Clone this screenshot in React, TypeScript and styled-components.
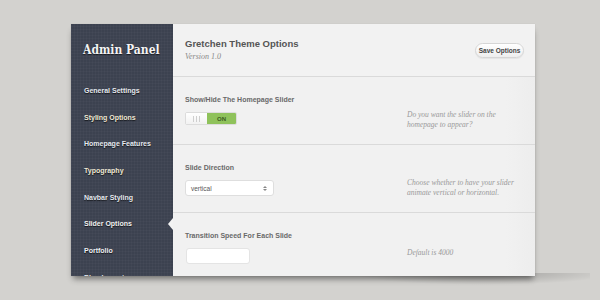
import React from "react";
import styled, { createGlobalStyle } from "styled-components";

const Global = createGlobalStyle`
  html { margin: 0; padding: 0; background: #d3d2cf; }
  body { margin: 0; padding: 0; width: 600px; height: 300px; overflow: hidden; font-family: "Liberation Sans", Arial, sans-serif; }
`;

const Stage = styled.div`
  padding: 24px 0 0 71px;
`;

const Frame = styled.div`
  position: relative;
  width: 464px;
  height: 252px;
  display: flex;
  box-shadow: 0 5px 6px -2px rgba(0, 0, 0, 0.45), 0 0 1px rgba(0,0,0,0.1);
  &::before {
    content: "";
    position: absolute;
    left: 280px;
    right: -55px;
    bottom: -9px;
    height: 12px;
    background: radial-gradient(ellipse at 55% 0%, rgba(0,0,0,0.25), rgba(0,0,0,0) 70%);
    z-index: -1;
  }
`;

const Sidebar = styled.nav`
  width: 102px;
  flex: none;
  overflow: hidden;
  background-color: #3c4250;
  background-image:
    repeating-linear-gradient(0deg, rgba(255,255,255,0.025) 0 1px, transparent 1px 3px),
    repeating-linear-gradient(90deg, rgba(255,255,255,0.025) 0 1px, transparent 1px 3px);
  display: flex;
  flex-direction: column;
`;

const Brand = styled.div`
  height: 53px;
  flex: none;
  display: flex;
  align-items: center;
  padding-left: 12px;
  padding-bottom: 2px;
  box-sizing: border-box;
  font-family: "DejaVu Serif", serif;
  font-weight: bold;
  font-stretch: condensed;
  font-size: 12px;
  color: #f4f4f4;
  text-shadow: 0 1px 1px rgba(0,0,0,0.6);
`;

const NavItem = styled.div<{ $tone: string; $active?: boolean }>`
  position: relative;
  height: 26.7px;
  flex: none;
  display: flex;
  align-items: center;
  padding-left: 13px;
  font-size: 7px;
  font-weight: bold;
  color: ${(p) => p.$tone};
  text-shadow: 0 1px 1px rgba(0,0,0,0.7);
  &::after {
    content: "";
    display: ${(p) => (p.$active ? "block" : "none")};
    position: absolute;
    right: 0;
    top: 50%;
    margin-top: -6px;
    border-style: solid;
    border-width: 6px 5px 6px 0;
    border-color: transparent #f3f3f3 transparent transparent;
  }
`;

const Main = styled.main`
  flex: 1;
  overflow: hidden;
  background: #f1f1f1;
  display: flex;
  flex-direction: column;
`;

const Header = styled.header`
  height: 53px;
  flex: none;
  box-sizing: border-box;
  display: flex;
  align-items: center;
  justify-content: space-between;
  padding: 0 11px 0 12px;
  background: #f2f2f2;
  border-bottom: 1px solid #dadada;
  box-shadow: 0 1px 0 #fafafa;
`;

const TitleBlock = styled.div`
  display: flex;
  flex-direction: column;
  gap: 3px;
  margin-top: -2px;
`;

const Title = styled.div`
  font-size: 9.5px;
  font-weight: bold;
  color: #555;
`;

const Version = styled.div`
  font-family: "Liberation Serif", serif;
  font-style: italic;
  font-size: 8px;
  color: #888;
`;

const SaveButton = styled.button`
  height: 15px;
  width: 49px;
  padding: 0;
  border-radius: 8px;
  border: 1px solid #d6d6d6;
  background: linear-gradient(#ffffff, #eeeeee);
  box-shadow: 0 1px 1px rgba(0,0,0,0.06);
  font-family: "Liberation Sans", Arial, sans-serif;
  font-size: 6.5px;
  font-weight: bold;
  color: #444;
`;

const Row = styled.section<{ $h: number }>`
  height: ${(p) => p.$h}px;
  flex: none;
  box-sizing: border-box;
  display: grid;
  grid-template-columns: 222px 1fr;
  padding-left: 12px;
  border-bottom: 1px solid #dadada;
  box-shadow: 0 1px 0 #fafafa;
  background: linear-gradient(90deg, #f1f1f1 0%, #f1f1f1 92%, #ededed 100%);
`;

const Field = styled.div`
  display: flex;
  flex-direction: column;
  align-items: flex-start;
  padding-top: 19px;
  gap: 9px;
`;

const Label = styled.div`
  font-size: 7px;
  font-weight: bold;
  color: #696969;
`;

const Desc = styled.div<{ $top: number }>`
  padding-top: ${(p) => p.$top}px;
  font-family: "Liberation Serif", serif;
  font-style: italic;
  font-size: 7.5px;
  line-height: 9.5px;
  color: #999999;
`;

const Toggle = styled.div`
  display: flex;
  height: 13px;
  width: 52px;
  border: 1px solid #dcdcdc;
  border-radius: 2px;
  box-sizing: border-box;
  overflow: hidden;
  background: #fff;
`;

const Grip = styled.div`
  width: 21px;
  display: flex;
  align-items: center;
  justify-content: center;
  gap: 2px;
  background: linear-gradient(#ffffff, #f2f2f2);
`;

const GripLine = styled.span`
  width: 1px;
  height: 6px;
  background: #cfcfcf;
`;

const OnPart = styled.div`
  flex: 1;
  background: #8fc25b;
  display: flex;
  align-items: center;
  justify-content: center;
  font-size: 6px;
  font-weight: bold;
  color: #3d5d22;
`;

const Select = styled.div`
  width: 89px;
  height: 16px;
  box-sizing: border-box;
  border: 1px solid #dedede;
  border-radius: 3px;
  background: #fff;
  display: flex;
  align-items: center;
  justify-content: space-between;
  padding: 0 6px 0 5px;
  font-size: 6.5px;
  color: #555;
`;

const Arrows = styled.span`
  display: flex;
  flex-direction: column;
  gap: 1px;
`;

const Tri = styled.span<{ $up?: boolean }>`
  width: 0;
  height: 0;
  border-left: 2px solid transparent;
  border-right: 2px solid transparent;
  ${(p) => (p.$up ? "border-bottom: 2px solid #888;" : "border-top: 2px solid #888;")}
`;

const TextInput = styled.div`
  width: 64px;
  height: 16px;
  box-sizing: border-box;
  border: 1px solid #e4e4e4;
  border-radius: 3px;
  background: #fff;
  margin-left: 1px;
`;

const navItems: { label: string; tone: string; active?: boolean }[] = [
  { label: "General Settings", tone: "#e6eaf0" },
  { label: "Styling Options", tone: "#efe9d6" },
  { label: "Homepage Features", tone: "#e6eaf0" },
  { label: "Typography", tone: "#efe9d6" },
  { label: "Navbar Styling", tone: "#e6eaf0" },
  { label: "Slider Options", tone: "#f2f2f2", active: true },
  { label: "Portfolio", tone: "#eef0f4" },
  { label: "Blog Layout", tone: "#e6eaf0" },
];

export default function App() {
  return (
    <>
      <Global />
      <Stage>
        <Frame>
          <Sidebar>
            <Brand>Admin Panel</Brand>
            {navItems.map((n) => (
              <NavItem key={n.label} $tone={n.tone} $active={n.active}>
                {n.label}
              </NavItem>
            ))}
          </Sidebar>
          <Main>
            <Header>
              <TitleBlock>
                <Title>Gretchen Theme Options</Title>
                <Version>Version 1.0</Version>
              </TitleBlock>
              <SaveButton>Save Options</SaveButton>
            </Header>
            <Row $h={68}>
              <Field>
                <Label>Show/Hide The Homepage Slider</Label>
                <Toggle>
                  <Grip>
                    <GripLine />
                    <GripLine />
                    <GripLine />
                  </Grip>
                  <OnPart>ON</OnPart>
                </Toggle>
              </Field>
              <Desc $top={33}>
                Do you want the slider on the
                <br />
                homepage to appear?
              </Desc>
            </Row>
            <Row $h={68}>
              <Field>
                <Label>Slide Direction</Label>
                <Select>
                  vertical
                  <Arrows>
                    <Tri $up />
                    <Tri />
                  </Arrows>
                </Select>
              </Field>
              <Desc $top={33}>
                Choose whether to have your slider
                <br />
                animate vertical or horizontal.
              </Desc>
            </Row>
            <Row $h={68}>
              <Field>
                <Label>Transition Speed For Each Slide</Label>
                <TextInput />
              </Field>
              <Desc $top={35}>Default is 4000</Desc>
            </Row>
          </Main>
        </Frame>
      </Stage>
    </>
  );
}
